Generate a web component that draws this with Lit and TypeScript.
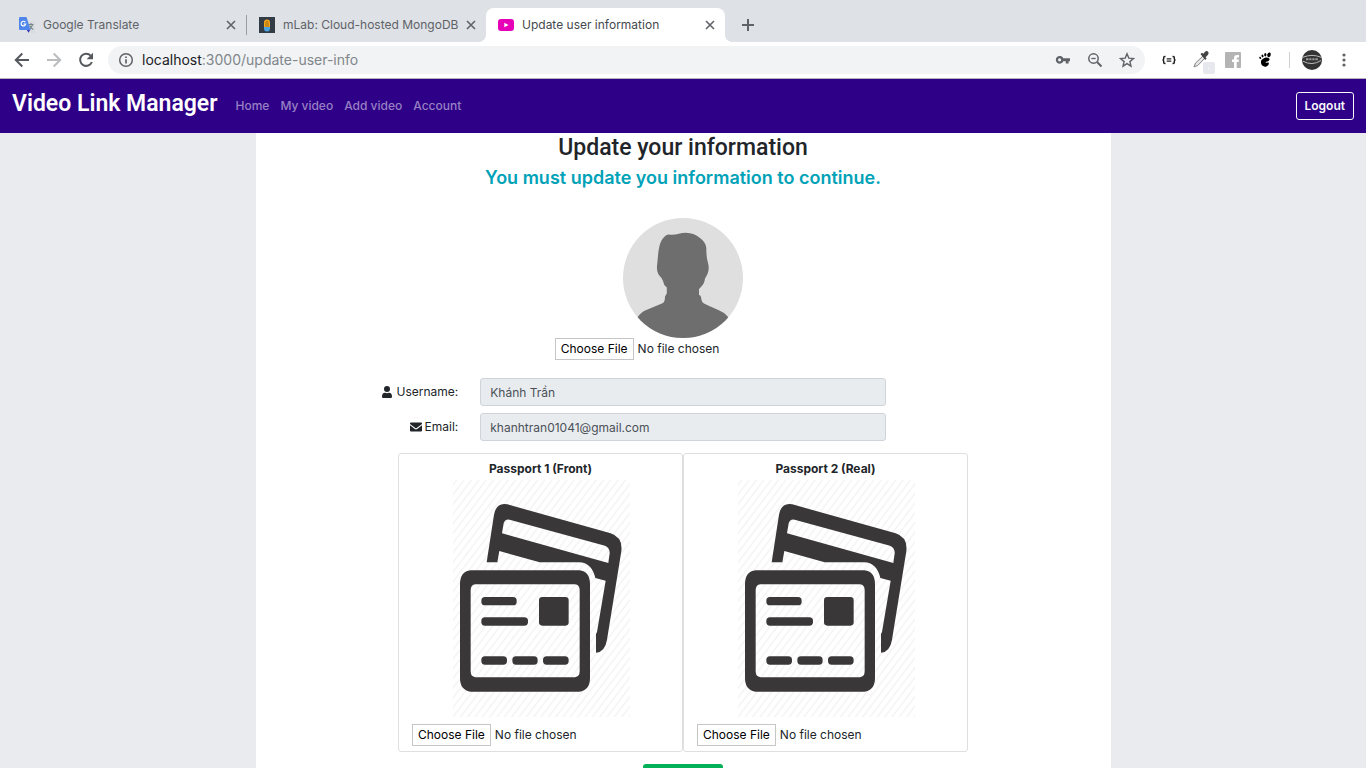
import { LitElement, html, css } from "lit";
import { customElement, property } from "lit/decorators.js";

const base = css`
  :host {
    font-family: Inter, "Liberation Sans", sans-serif;
    font-size: 12px;
    line-height: 18px;
  }
  * {
    box-sizing: border-box;
  }
  button {
    font: inherit;
    color: inherit;
    background: none;
    border: 0;
    padding: 0;
    margin: 0;
  }
  svg {
    display: block;
    flex: none;
  }
`;

const favicons: Record<string, unknown> = {
  translate: html`<svg width="16" height="16" viewBox="0 0 16 16">
    <path d="M6 4h9a1 1 0 0 1 1 1v10a1 1 0 0 1-1 1H9z" fill="#dadcdf" />
    <path d="M9.5 7.5h5M12 6v1.5M13.6 7.6c-.6 2.2-2 3.700-3.400 4.600M10.600 8.500c.7 1.700 2 3 3.600 3.900" stroke="#73868c" stroke-width="1.100" fill="none" />
    <path d="M7.500 12.500h4L9.500 15.800z" fill="#3b35b5" />
    <path d="M1 0h6.500l4 13H1a1 1 0 0 1-1-1V1a1 1 0 0 1 1-1z" fill="#4f86ec" />
    <path d="M6.300 5.200A2.300 2.300 0 1 0 6.700 7H4.600" stroke="#fff" stroke-width="1.200" fill="none" />
  </svg>`,
  mlab: html`<svg width="16" height="16" viewBox="0 0 16 16">
    <rect width="16" height="16" fill="#323c46" />
    <path d="M5 11V5.500a3 3 0 0 1 6 0V11z" fill="#f6a81c" />
    <path d="M7 10V5.500a1 1 0 0 1 2 0V10" stroke="#8a5a10" stroke-width=".8" fill="none" />
    <path d="M5 10h6v1.500a3 3 0 0 1-6 0z" fill="#4aa3df" />
  </svg>`,
  video: html`<svg width="16" height="16" viewBox="0 0 16 16">
    <rect y="2" width="16" height="12" rx="3" fill="#e600b8" />
    <path d="M6.300 5.700 10.500 8l-4.200 2.300z" fill="#fff" />
  </svg>`,
};

@customElement("browser-tab")
class BrowserTab extends LitElement {
  @property() label = "";
  @property() icon = "";
  @property({ type: Boolean, reflect: true }) active = false;

  static styles = [
    base,
    css`
      :host {
        box-sizing: border-box;
        position: relative;
        flex: 0 1 239px;
        min-width: 0;
        height: 34px;
        display: flex;
        align-items: center;
        padding: 0 8px 0 12px;
        color: #5f6368;
      }
      :host([active]) {
        background: #fff;
        border-radius: 8px 8px 0 0;
        color: #45494d;
      }
      :host([active])::before,
      :host([active])::after {
        content: "";
        position: absolute;
        bottom: 0;
        width: 8px;
        height: 8px;
      }
      :host([active])::before {
        right: 100%;
        background: radial-gradient(circle at 0 0, transparent 8px, #fff 8px);
      }
      :host([active])::after {
        left: 100%;
        background: radial-gradient(circle at 100% 0, transparent 8px, #fff 8px);
      }
      .title {
        flex: 1;
        min-width: 0;
        margin-left: 8px;
        text-align: left;
        white-space: nowrap;
        overflow: hidden;
      }
    `,
  ];

  render() {
    return html`
      ${favicons[this.icon]}
      <button class="title">${this.label}</button>
      <button aria-label="Close tab">
        <svg width="14" height="14" viewBox="0 0 14 14">
          <path d="M3 3l8 8M11 3l-8 8" stroke="#5f6368" stroke-width="1.600" />
        </svg>
      </button>
    `;
  }
}

@customElement("browser-chrome")
class BrowserChrome extends LitElement {
  static styles = [
    base,
    css`
      :host {
        display: block;
        flex: none;
      }
      .tabs {
        display: flex;
        align-items: center;
        background: #dee1e6;
        padding: 8px 7px 0;
      }
      .divider {
        flex: none;
        width: 1px;
        height: 20px;
        background: #9a9da2;
      }
      .plus {
        margin-left: 15px;
      }
      .bar {
        display: flex;
        align-items: center;
        gap: 12px;
        height: 37px;
        padding: 0 12px;
        background: #fff;
        border-bottom: 1px solid #b5b3b8;
      }
      .address {
        flex: 1;
        min-width: 0;
        display: flex;
        align-items: center;
        gap: 16px;
        height: 28px;
        padding: 0 10px;
        border-radius: 14px;
        background: #f1f3f4;
        margin-right: 2px;
      }
      .site {
        flex: 1;
        display: flex;
        align-items: center;
        gap: 8px;
        font-size: 14px;
        color: #80868b;
      }
      .host {
        color: #202124;
      }
      .rule {
        width: 1px;
        height: 16px;
        margin-left: 2px;
        background: #cfd1d4;
      }
    `,
  ];

  render() {
    return html`
      <div class="tabs">
        <browser-tab icon="translate" label="Google Translate"></browser-tab>
        <div class="divider"></div>
        <browser-tab icon="mlab" label="mLab: Cloud-hosted MongoDB"></browser-tab>
        <browser-tab icon="video" label="Update user information" active></browser-tab>
        <button class="plus" aria-label="New tab">
          <svg width="16" height="16" viewBox="0 0 16 16">
            <path d="M8 2v12M2 8h12" stroke="#5f6368" stroke-width="2" />
          </svg>
        </button>
      </div>
      <div class="bar">
        <button aria-label="Back">
          <svg width="20" height="20" viewBox="0 0 20 20" fill="none" stroke="#55595e" stroke-width="2">
            <path d="M17 10H4M10.300 3.500 3.800 10l6.500 6.500" />
          </svg>
        </button>
        <button aria-label="Forward">
          <svg width="20" height="20" viewBox="0 0 20 20" fill="none" stroke="#babcbe" stroke-width="2">
            <path d="M3 10h13M9.700 3.500l6.500 6.500-6.500 6.500" />
          </svg>
        </button>
        <button aria-label="Reload">
          <svg width="20" height="20" viewBox="0 0 20 20">
            <path d="M14.700 5.600A6.100 6.100 0 1 0 15.900 12" fill="none" stroke="#55595e" stroke-width="2" />
            <path d="M17 2.800v6.400h-6.400z" fill="#55595e" />
          </svg>
        </button>
        <div class="address">
          <div class="site">
            <svg width="16" height="16" viewBox="0 0 16 16">
              <circle cx="8" cy="8" r="6.300" fill="none" stroke="#5f6368" stroke-width="1.500" />
              <path d="M8 7.200v4.300M8 4.400v1.700" stroke="#5f6368" stroke-width="1.700" />
            </svg>
            <div><span class="host">localhost</span>:3000/update-user-info</div>
          </div>
          <button aria-label="Saved passwords">
            <svg width="16" height="16" viewBox="0 0 16 16">
              <path fill-rule="evenodd" d="M8.300 6.300H15v3h-1.400v2.200h-2.800V9.300H8.300a3.900 3.900 0 1 1 0-3zM4.600 6.200a1.600 1.600 0 1 0 0 3.200 1.600 1.600 0 0 0 0-3.200z" fill="#5f6368" />
            </svg>
          </button>
          <button aria-label="Zoom">
            <svg width="16" height="16" viewBox="0 0 16 16" fill="none" stroke="#5f6368">
              <circle cx="6.500" cy="6.500" r="4.700" stroke-width="1.500" />
              <path d="M4.300 6.500h4.400" stroke-width="1.300" />
              <path d="m10 10 4.500 4.500" stroke-width="2" />
            </svg>
          </button>
          <button aria-label="Bookmark">
            <svg width="16" height="16" viewBox="0 0 16 16">
              <path d="m8 1.800 1.800 4.300 4.700.4-3.600 3.100 1.100 4.600L8 11.700l-4 2.500 1.100-4.600-3.600-3.100 4.700-.4z" fill="none" stroke="#5f6368" stroke-width="1.400" />
            </svg>
          </button>
        </div>
        <button aria-label="JSON viewer">
          <svg width="20" height="20" viewBox="0 0 20 20" fill="none" stroke="#222" stroke-width="1.500">
            <path d="M6.500 6.500H5.700q-1 0-1 1v1.300q0 1.200-1.200 1.200 1.200 0 1.200 1.200v1.300q0 1 1 1h.8M13.500 6.500h.8q1 0 1 1v1.300q0 1.200 1.200 1.200-1.200 0-1.200 1.200v1.300q0 1-1 1h-.8" />
            <path d="M7.700 8.800h4.600M7.700 11.200h4.600" stroke-width="1.200" />
          </svg>
        </button>
        <button aria-label="Colour picker">
          <svg width="20" height="20" viewBox="0 0 20 20" overflow="visible">
            <path d="M12 6 4.500 13 3 16.800l3.800-1.300L14 8z" fill="#e4e4e4" stroke="#888" />
            <path d="m9.500 4 1.500-1.300 1.300 1 2-2.200q2-1 3 .5.900 1.600-.5 3l-2.200 2.200 1 1.300-1.400 1.400z" fill="#444" />
            <rect x="12" y="12" width="12" height="12" rx="2" fill="#e6e8ed" />
            <rect x="17" y="18" width="1" height="1" fill="#fff" />
          </svg>
        </button>
        <button aria-label="Facebook">
          <svg width="20" height="20" viewBox="0 0 20 20">
            <rect x="2" y="2" width="16" height="16" rx="1" fill="#b4b4b4" />
            <path d="M11 18v-6H9V9.500h2V8q0-3 3-3h2v2.400h-1.300q-1 0-1 1v1.100H16l-.4 2.500h-1.900v6z" fill="#fff" />
          </svg>
        </button>
        <button aria-label="Gnome extensions">
          <svg width="20" height="20" viewBox="0 0 20 20">
            <path d="M14 8.300c2 2-1.700 3.800-3.500 3.600.5 1.800 3-.2 3.300 1 .5 2-2.300 4.200-4.600 3.700-2.600-.6-3.700-3.400-3.200-5.300.6-2.500 5.600-5 8-3z" fill="#000" />
            <ellipse cx="14" cy="4.800" rx="1.700" ry="2.400" transform="rotate(20 14 4.800)" />
            <ellipse cx="10.300" cy="4.800" rx="1.100" ry="1.700" />
            <ellipse cx="7.500" cy="6" rx="1" ry="1.400" transform="rotate(-20 7.500 6)" />
            <ellipse cx="5.200" cy="7.900" rx=".9" ry="1.200" transform="rotate(-30 5.200 7.900)" />
          </svg>
        </button>
        <div class="rule"></div>
        <button aria-label="Profile">
          <svg width="20" height="20" viewBox="0 0 20 20">
            <circle cx="10" cy="10" r="10" fill="#333" />
            <path d="M.8 7.300Q10 3.500 19.200 7.300M1 11.200q9 5 18-.7" stroke="#bbb" fill="none" />
            <path d="M4 9.300h2.500M7.300 9.300h2.200M10.300 9.300h2.200M13.300 9.300h2.500" stroke="#999" stroke-width="2" />
          </svg>
        </button>
        <button aria-label="Menu">
          <svg width="20" height="20" viewBox="0 0 20 20" fill="#5f6368">
            <circle cx="10" cy="5" r="1.600" /><circle cx="10" cy="10" r="1.600" /><circle cx="10" cy="15" r="1.600" />
          </svg>
        </button>
      </div>
    `;
  }
}

@customElement("site-nav")
class SiteNav extends LitElement {
  static styles = [
    base,
    css`
      :host {
        box-sizing: border-box;
        flex: none;
        display: flex;
        align-items: center;
        height: 54px;
        padding: 0 12px;
        background: #2e0087;
        font-weight: 500;
      }
      a {
        text-decoration: none;
      }
      .brand {
        font-family: Roboto, sans-serif;
        font-size: 23px;
        line-height: 28px;
        font-weight: 600;
        color: #fff;
        margin: 0 18px 4px 0;
      }
      .links {
        flex: 1;
        display: flex;
        gap: 11px;
      }
      .links a {
        color: #9780c4;
      }
      .logout {
        height: 28px;
        padding: 0 8px;
        border: 1px solid #f8f9fa;
        border-radius: 3px;
        color: #f8f9fa;
        font-weight: 600;
      }
    `,
  ];

  render() {
    return html`
      <a class="brand" href="#">Video Link Manager</a>
      <nav class="links">
        ${["Home", "My video", "Add video", "Account"].map((t) => html`<a href="#">${t}</a>`)}
      </nav>
      <button class="logout">Logout</button>
    `;
  }
}

const fileStyles = css`
  .file {
    display: block;
    width: 100%;
    height: 22px;
    font: inherit;
    line-height: 20px;
    color: #212529;
  }
  .file::file-selector-button {
    height: 22px;
    margin: 0 4px 0 0;
    padding: 0 5px;
    border: 1px solid #c6c6c6;
    border-radius: 0;
    background: #fff;
    color: #000;
    font: inherit;
    line-height: 20px;
  }
`;

@customElement("passport-card")
class PassportCard extends LitElement {
  @property() label = "";

  static styles = [
    base,
    fileStyles,
    css`
      :host {
        display: flex;
        flex-direction: column;
        align-items: center;
        border: 1px solid #dfdfdf;
        border-radius: 3px;
        padding: 6px 13px 5px;
      }
      label {
        font-weight: 700;
      }
      svg {
        margin: 1px 0 7px;
      }
    `,
  ];

  render() {
    return html`
      <label for="file">${this.label}</label>
      <svg width="178" height="238" viewBox="169 103 534 714">
        <defs>
          <pattern id="hatch" width="22" height="29" patternUnits="userSpaceOnUse">
            <path d="M-5.500 36.250 27.500-7.250M-16.500 21.750 5.500-7.250M16.500 36.250 38.500 7.250" stroke="#f3f3f3" stroke-width="4" />
          </pattern>
        </defs>
        <rect x="172" y="106" width="531" height="711" fill="url(#hatch)" />
        <g fill="#3a3738" fill-rule="evenodd">
          <path d="M273 353 295 210Q302 172 335 179L645 266Q682 278 677 320L634 585Q628 622 601 624V568L604 562 630 408 599 400C593 371 576 353 550 353H432L311 319 305 353zM319 266 324 236Q328 222 342 225L628 303Q643 309 642 326L638 355z" />
          <path d="M225 377H551Q583 381 583 418V700Q583 737 551 741H225Q193 737 193 700V418Q193 381 225 377zM239 419Q225 421 225 436V680Q225 696 239 698H538Q552 696 552 680V436Q552 421 538 419z" />
          <rect x="257" y="457" width="106" height="25" rx="11" />
          <rect x="257" y="518" width="140" height="25" rx="11" />
          <rect x="430" y="457" width="89" height="86" rx="10" />
          <rect x="257" y="635" width="77" height="25" rx="11" />
          <rect x="350" y="635" width="76" height="25" rx="11" />
          <rect x="442" y="635" width="77" height="25" rx="11" />
        </g>
      </svg>
      <input class="file" id="file" type="file" />
    `;
  }
}

@customElement("update-form")
class UpdateForm extends LitElement {
  static styles = [
    base,
    fileStyles,
    css`
      :host {
        display: block;
        width: 100%;
        max-width: 855px;
        min-height: 100%;
        margin: 0 auto;
        background: #fff;
        color: #212529;
      }
      h1,
      h2 {
        margin: 0;
        text-align: center;
      }
      h1 {
        font-family: Roboto, sans-serif;
        font-size: 23px;
        line-height: 30px;
        font-weight: 500;
      }
      h2 {
        font-size: 18px;
        line-height: 30px;
        font-weight: 600;
        color: #00a2b8;
      }
      .photo {
        width: 30%;
        margin: 25px auto 18px;
        display: flex;
        flex-direction: column;
        align-items: center;
      }
      .fields {
        display: grid;
        grid-template-columns: 3fr 6fr 3fr;
        row-gap: 7px;
      }
      .fields label {
        grid-column: 1;
        display: flex;
        justify-content: flex-end;
        align-items: center;
        gap: 3px;
        padding: 0 11px;
      }
      .cell {
        display: flex;
        padding: 0 11px;
      }
      .cell input {
        width: 100%;
        height: 28px;
        padding: 0 9px;
        border: 1px solid #ced4da;
        border-radius: 3px;
        background: #e9ecef;
        color: #495057;
        font: inherit;
      }
      .cards {
        display: grid;
        grid-template-columns: 2fr 4fr 4fr 2fr;
        margin-top: 12px;
      }
      .first {
        grid-column: 2;
      }
      .submit {
        display: block;
        width: 80px;
        height: 36px;
        margin: 12px auto;
        border-radius: 3px;
        background: #04b158;
        color: #fff;
      }
    `,
  ];

  render() {
    return html`
      <h1>Update your information</h1>
      <h2>You must update you information to continue.</h2>
      <div class="photo">
        <svg width="120" height="120" viewBox="0 0 120 120">
          <clipPath id="round"><circle cx="60" cy="60" r="60" /></clipPath>
          <g clip-path="url(#round)">
            <rect width="120" height="120" fill="#dfdfdf" />
            <path
              d="M46 16.500C52 17.500 57 15 63 14.800 68 15 73 16.500 77 20 81 23 83 26 83.300 30 83.300 35 83.500 40 85 45 86.800 51 85 56 82 60.500 81.500 64 80.500 66.500 78 69L76 71V77Q78 77 78.300 81 78.600 84 81 85.500C88 89.500 95 91 101 95Q105 98 107 102V120H13V102Q16 96 21 93C27 90 34 88 40 85Q42 83.500 42 78.500L43.800 75.500V69.500Q40.500 67 40 63L38.500 60C35 57 33.500 53 34 48 35 40 35 33 37 26Q39 20 43.500 17z"
              fill="#6e6e6e"
            />
          </g>
        </svg>
        <input class="file" type="file" aria-label="Profile photo" />
      </div>
      <div class="fields">
        <label for="username">
          <svg width="12" height="12" viewBox="0 0 12 12" fill="#212529">
            <circle cx="6" cy="3" r="3" />
            <path d="M1 10.500Q1 6.800 4 6.700q2 .9 4 0 3 .1 3 3.800 0 1.500-1 1.500H2q-1 0-1-1.500z" />
          </svg>
          Username:
        </label>
        <div class="cell"><input id="username" value="Khánh Trần" disabled /></div>
        <label for="email">
          <svg width="12" height="12" viewBox="0 0 12 12" fill="#212529">
            <path d="M1 1.500h10q1 0 1 1v.4L6.700 7Q6 7.500 5.300 7L0 2.900v-.4q0-1 1-1z" />
            <path d="M0 4.200 4.800 8Q6 8.800 7.200 8L12 4.200v5.300q0 1-1 1H1q-1 0-1-1z" />
          </svg>
          Email:
        </label>
        <div class="cell"><input id="email" value="khanhtran01041@gmail.com" disabled /></div>
      </div>
      <div class="cards">
        <passport-card class="first" label="Passport 1 (Front)"></passport-card>
        <passport-card label="Passport 2 (Real)"></passport-card>
      </div>
      <button class="submit">Update</button>
    `;
  }
}

@customElement("app-root")
class AppRoot extends LitElement {
  static styles = css`
    :host {
      display: flex;
      flex-direction: column;
      height: 100vh;
      overflow: hidden;
      background: #e9ebee;
    }
    main {
      flex: 1;
      min-height: 0;
      overflow: hidden;
    }
  `;

  render() {
    return html`
      <browser-chrome></browser-chrome>
      <site-nav></site-nav>
      <main><update-form></update-form></main>
    `;
  }
}
